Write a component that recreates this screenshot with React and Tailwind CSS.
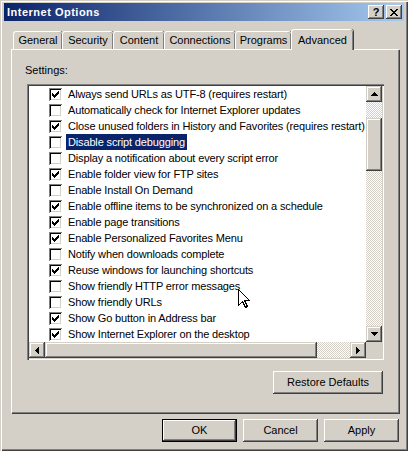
const FONT = "font-['Tahoma','Liberation_Sans',Arial,sans-serif]";
const raised = "shadow-[inset_-1px_-1px_#404040,inset_1px_1px_#d4d0c8,inset_-2px_-2px_#808080,inset_2px_2px_#ffffff]";
const button = "shadow-[inset_-1px_-1px_#404040,inset_1px_1px_#ffffff,inset_-2px_-2px_#808080,inset_2px_2px_#d4d0c8]";
const checker = "bg-[repeating-conic-gradient(#d4d0c8_0%_25%,#ffffff_0%_50%)] bg-[length:2px_2px]";

const settings = [
  ["Always send URLs as UTF-8 (requires restart)", true],
  ["Automatically check for Internet Explorer updates", false],
  ["Close unused folders in History and Favorites (requires restart)", true],
  ["Disable script debugging", false, true],
  ["Display a notification about every script error", false],
  ["Enable folder view for FTP sites", true],
  ["Enable Install On Demand", false],
  ["Enable offline items to be synchronized on a schedule", true],
  ["Enable page transitions", true],
  ["Enable Personalized Favorites Menu", true],
  ["Notify when downloads complete", false],
  ["Reuse windows for launching shortcuts", true],
  ["Show friendly HTTP error messages", false],
  ["Show friendly URLs", false],
  ["Show Go button in Address bar", true],
  ["Show Internet Explorer on the desktop", true],
];

const tabs = [
  ["General", "w-[49px]"],
  ["Security", "w-[51px]"],
  ["Content", "w-[51px]"],
  ["Connections", "w-[71px]"],
  ["Programs", "w-[56px]"],
];

function CheckBox({ checked }) {
  return (
    <svg width="13" height="13" viewBox="0 0 13 13" shapeRendering="crispEdges" className="shrink-0">
      <rect x="0" y="0" width="13" height="13" fill="#808080" />
      <rect x="1" y="1" width="12" height="12" fill="#ffffff" />
      <rect x="1" y="1" width="11" height="11" fill="#000000" />
      <rect x="2" y="2" width="10" height="10" fill="#d4d0c8" />
      <rect x="2" y="2" width="9" height="9" fill="#ffffff" />
      {checked && (
        <path
          fill="#000"
          d="M9 3h1v1h-1z M8 4h2v1h-2z M3 5h1v1h-1z M7 5h3v1h-3z M3 6h2v1h-2z M6 6h3v1h-3z M3 7h5v1h-5z M4 8h3v1h-3z M5 9h1v1h-1z"
        />
      )}
    </svg>
  );
}

function Arrow({ dir }) {
  const d = {
    up: "M4 0h1v1h-1z M3 1h3v1h-3z M2 2h5v1h-5z M1 3h7v1h-7z",
    down: "M1 0h7v1h-7z M2 1h5v1h-5z M3 2h3v1h-3z M4 3h1v1h-1z",
    left: "M3 1h1v7h-1z M2 2h1v5h-1z M1 3h1v3h-1z M0 4h1v1h-1z",
    right: "M0 1h1v7h-1z M1 2h1v5h-1z M2 3h1v3h-1z M3 4h1v1h-1z",
  }[dir];
  const horiz = dir === "left" || dir === "right";
  return (
    <div className={`w-[16px] h-[16px] bg-[#d4d0c8] ${raised} flex items-center justify-center shrink-0`}>
      <svg width={horiz ? 4 : 9} height={horiz ? 9 : 4} viewBox={horiz ? "0 0 4 9" : "0 0 9 4"} shapeRendering="crispEdges">
        <path d={d} fill="#000" />
      </svg>
    </div>
  );
}

function Btn({ children, className = "", isDefault = false }) {
  return (
    <div className={`${isDefault ? "border border-black" : ""} ${className}`}>
      <div className={`h-full w-full bg-[#d4d0c8] ${button} flex items-center justify-center text-[11px] text-black`}>
        {children}
      </div>
    </div>
  );
}

export default function App() {
  return (
    <div
      className={`${FONT} relative w-[408px] h-[451px] bg-[#d4d0c8] pt-[3px] px-[4px] select-none shadow-[inset_1px_1px_#d4d0c8,inset_2px_2px_#ffffff,inset_-1px_-1px_#404040,inset_-2px_-2px_#808080] overflow-hidden`}
    >
      {/* Title bar */}
      <div className="h-[18px] flex items-center justify-between bg-[linear-gradient(90deg,#0a246a,#a6caf0)] pl-[3px] pr-[2px]">
        <span className="text-white font-bold text-[11px] tracking-[0.5px] leading-none">Internet Options</span>
        <div className="flex gap-[2px]">
          <div className={`w-[16px] h-[14px] bg-[#d4d0c8] ${button} flex items-center justify-center text-[11px] font-bold leading-none text-black`}>?</div>
          <div className={`w-[16px] h-[14px] bg-[#d4d0c8] ${button} flex items-center justify-center`}>
            <svg width="8" height="7" viewBox="0 0 8 7" shapeRendering="crispEdges">
              <path fill="#000" d="M0 0h2v1h-2z M6 0h2v1h-2z M1 1h2v1h-2z M5 1h2v1h-2z M2 2h4v1h-4z M3 3h2v1h-2z M2 4h4v1h-4z M1 5h2v1h-2z M5 5h2v1h-2z M0 6h2v1h-2z M6 6h2v1h-2z" />
            </svg>
          </div>
        </div>
      </div>

      <div className="pl-[7px] pt-[8px]">
        {/* Tabs */}
        <div className="flex items-end h-[20px] pl-[2px] relative z-10">
          {tabs.map(([label, w]) => (
            <div
              key={label}
              className={`${w} h-[18px] rounded-t-[3px] border-t border-l border-white shadow-[inset_-1px_0_#808080,1px_0_#404040] flex items-center justify-center text-[11px] text-black`}
            >
              {label}
            </div>
          ))}
          <div className="w-[62px] h-[21px] -mb-[1px] rounded-t-[3px] border-t border-l border-white bg-[#d4d0c8] shadow-[inset_-1px_0_#808080,1px_0_#404040] flex items-start pt-[2px] justify-center text-[11px] text-black">
            Advanced
          </div>
        </div>

        {/* Panel */}
        <div className="w-[388px] h-[364px] border-t border-l border-white shadow-[inset_-1px_-1px_#808080,1px_1px_#404040] pl-[13px] pt-[13px]">
          <div className="h-[14px] leading-[14px] text-[11px] text-black">Settings:</div>

          <div className="mt-[7px] ml-[2px] w-[357px] h-[276px] shadow-[inset_1px_1px_#808080,inset_2px_2px_#404040,inset_-1px_-1px_#ffffff,inset_-2px_-2px_#d4d0c8] p-[2px] bg-white">
            <div className="flex h-[256px]">
              <div className="w-[337px] overflow-hidden">
                {settings.map(([label, checked, selected]) => (
                  <div key={label} className="h-[16px] flex items-center pl-[20px] whitespace-nowrap">
                    <CheckBox checked={checked} />
                    <span
                      className={`ml-[4px] px-[2px] h-[16px] leading-[16px] text-[11px] tracking-[-0.15px] ${selected ? "bg-[#0a246a] text-white" : "text-black"}`}
                    >
                      {label}
                    </span>
                  </div>
                ))}
              </div>
              <div className="w-[16px] flex flex-col">
                <Arrow dir="up" />
                <div className={`h-[16px] ${checker}`} />
                <div className={`h-[53px] bg-[#d4d0c8] ${raised}`} />
                <div className={`flex-1 ${checker}`} />
                <Arrow dir="down" />
              </div>
            </div>
            <div className="flex h-[16px]">
              <Arrow dir="left" />
              <div className={`w-[272px] bg-[#d4d0c8] ${raised}`} />
              <div className={`flex-1 ${checker}`} />
              <Arrow dir="right" />
              <div className="w-[16px] bg-[#d4d0c8]" />
            </div>
          </div>

          <div className="flex justify-end w-[358px] mt-[11px]">
            <Btn className="w-[110px] h-[23px]">Restore Defaults</Btn>
          </div>
        </div>

        {/* Dialog buttons */}
        <div className="flex justify-end gap-[6px] w-[388px] mt-[6px]">
          <Btn isDefault className="w-[75px] h-[23px]">OK</Btn>
          <Btn className="w-[75px] h-[23px]">Cancel</Btn>
          <Btn className="w-[75px] h-[23px]">Apply</Btn>
        </div>
      </div>

      {/* Mouse cursor */}
      <svg className="absolute left-[238px] top-[289px]" width="13" height="21" viewBox="0 0 13 21" shapeRendering="crispEdges">
        <path d="M0.5 0.5 L0.5 16.5 L4.5 12.5 L7.5 18.5 L9.5 17.5 L6.5 11.5 L11.5 11.5 Z" fill="#fff" stroke="#000" strokeWidth="1" />
      </svg>
    </div>
  );
}
